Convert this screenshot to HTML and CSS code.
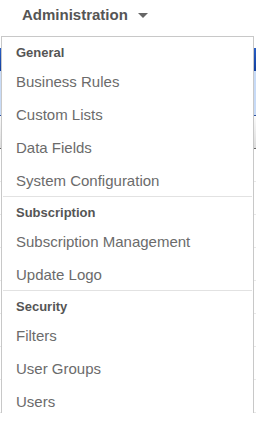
FILE: index.html
```html
<!DOCTYPE html>
<html lang="en">
<head>
    <meta charset="UTF-8">
    <meta name="viewport" content="width=device-width, initial-scale=1.0">
    <title>Administration</title>
    <link rel="stylesheet" href="styles.css">
</head>
<body>
    <nav class="top-nav">
        <span class="nav-title">Administration</span>
        <span class="caret"></span>
    </nav>
    <div class="title-bar"></div>
    <div class="sub-bar"></div>
    <div class="toolbar"></div>
    <div class="rows">
        <div class="row"></div>
        <div class="row"></div>
        <div class="row"></div>
        <div class="row"></div>
        <div class="row"></div>
        <div class="row"></div>
        <div class="row"></div>
        <div class="row"></div>
    </div>

    <ul class="menu">
        <li class="menu-header">General</li>
        <li class="menu-item">Business Rules</li>
        <li class="menu-item">Custom Lists</li>
        <li class="menu-item">Data Fields</li>
        <li class="menu-item">System Configuration</li>
        <li class="divider"></li>
        <li class="menu-header">Subscription</li>
        <li class="menu-item">Subscription Management</li>
        <li class="menu-item">Update Logo</li>
        <li class="divider"></li>
        <li class="menu-header">Security</li>
        <li class="menu-item">Filters</li>
        <li class="menu-item">User Groups</li>
        <li class="menu-item">Users</li>
    </ul>
</body>
</html>
```

FILE: styles.css
```css
body {
    font-family: "Liberation Sans", Arial, sans-serif;
    background-color: #fff;
    margin: 0;
    overflow: hidden;
    position: relative;
}
.top-nav {
    height: 48px;
    display: flex;
    align-items: flex-start;
    padding: 5px 0 0 22px;
    box-sizing: border-box;
    color: #555;
}
.nav-title {
    font-weight: bold;
    font-size: 15px;
    line-height: 20px;
}
.caret {
    width: 0;
    height: 0;
    margin: 8px 0 0 10px;
    border-left: 5px solid transparent;
    border-right: 5px solid transparent;
    border-top: 5px solid #666;
}
.title-bar {
    height: 23px;
    background: linear-gradient(#2a5ec4, #123f9f);
}
.sub-bar {
    height: 44px;
    background-color: #c8dbf7;
    border-bottom: 1px solid #2b4fa0;
}
.toolbar {
    height: 32px;
    background: linear-gradient(#fafafa, #dcdcdc);
    border-bottom: 1px solid #666;
}
.row {
    height: 33px;
    border-bottom: 1px solid #e8e8e8;
    box-sizing: border-box;
}
.menu {
    position: absolute;
    top: 36px;
    left: 1px;
    width: 253px;
    height: 384px;
    box-sizing: border-box;
    margin: 0;
    padding: 0 0 2px;
    list-style-type: none;
    background-color: #fff;
    border: 1px solid #c8c8c8;
}
.menu-header {
    padding: 6px 14px 1px;
    font-size: 13px;
    font-weight: bold;
    line-height: 20px;
    color: #555;
}
.menu-item {
    padding: 2px 14px 0;
    height: 33px;
    box-sizing: border-box;
    line-height: 31px;
    font-size: 15px;
    color: #6b6b6b;
}
.divider {
    height: 1px;
    margin: 0 1px;
    background-color: #e2e2e2;
}
```
